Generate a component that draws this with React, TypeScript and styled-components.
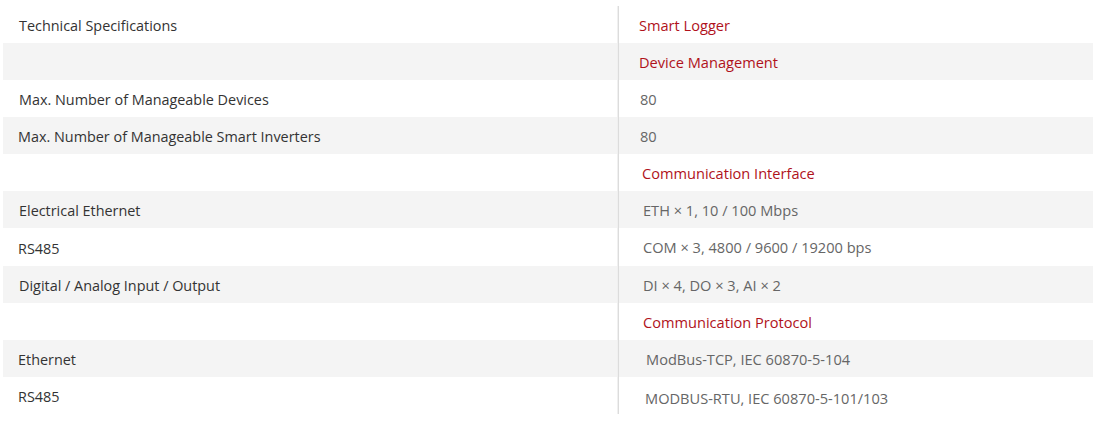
import React from "react";
import styled, { createGlobalStyle } from "styled-components";

const Global = createGlobalStyle`
  html, body { margin: 0; padding: 0; background: #fff; }
  body { font-family: "Open Sans", "Noto Sans", "Liberation Sans", sans-serif; }
`;

const Page = styled.div`
  padding: 6px 7px 0 3px;
  width: 1090px;
`;

const Table = styled.div`
  display: flex;
  flex-direction: column;
`;

const Row = styled.div<{ $shaded: boolean; $h: number }>`
  display: grid;
  grid-template-columns: 615px 1fr;
  height: ${(p) => p.$h}px;
  background: ${(p) => (p.$shaded ? "#f4f4f4" : "#fff")};
`;

const Label = styled.div<{ $indent: number }>`
  display: flex;
  align-items: center;
  padding-left: ${(p) => p.$indent}px;
  padding-top: 2px;
  font-size: 14.4px;
  color: #333;
`;

const Value = styled.div<{ $indent: number; $heading: boolean; $shift: number }>`
  display: flex;
  align-items: center;
  border-left: 1px solid #dcdcdc;
  box-shadow: -1px 0 0 #f0f0f0;
  padding-left: ${(p) => p.$indent}px;
  padding-top: ${(p) => p.$shift}px;
  font-size: 14.6px;
  color: ${(p) => (p.$heading ? "#b0121b" : "#666")};
`;

type Spec = { label: string; value: string; heading?: boolean; li: number; vi: number; vs?: number };

const specs: Spec[] = [
  { label: "Technical Specifications", value: "Smart Logger", heading: true, li: 16, vi: 20 },
  { label: "", value: "Device Management", heading: true, li: 16, vi: 20 },
  { label: "Max. Number of Manageable Devices", value: "80", li: 16, vi: 21 },
  { label: "Max. Number of Manageable Smart Inverters", value: "80", li: 15, vi: 21 },
  { label: "", value: "Communication Interface", heading: true, li: 16, vi: 23 },
  { label: "Electrical Ethernet", value: "ETH × 1, 10 / 100 Mbps", li: 16, vi: 24 },
  { label: "RS485", value: "COM × 3, 4800 / 9600 / 19200 bps", li: 15, vi: 24 },
  { label: "Digital / Analog Input / Output", value: "DI × 4, DO × 3, AI × 2", li: 16, vi: 24 },
  { label: "", value: "Communication Protocol", heading: true, li: 16, vi: 24 },
  { label: "Ethernet", value: "ModBus-TCP, IEC 60870-5-104", li: 15, vi: 27 },
  { label: "RS485", value: "MODBUS-RTU, IEC 60870-5-101/103", li: 15, vi: 26, vs: 4 },
];

const heights = [37, 37, 37, 37, 37, 37, 38, 37, 37, 37, 37];

export default function App() {
  return (
    <Page>
      <Global />
      <Table>
        {specs.map((s, i) => (
          <Row key={i} $shaded={i % 2 === 1} $h={heights[i]}>
            <Label $indent={s.li}>{s.label}</Label>
            <Value $indent={s.vi} $heading={!!s.heading} $shift={s.vs ?? 0}>
              {s.value}
            </Value>
          </Row>
        ))}
      </Table>
    </Page>
  );
}
